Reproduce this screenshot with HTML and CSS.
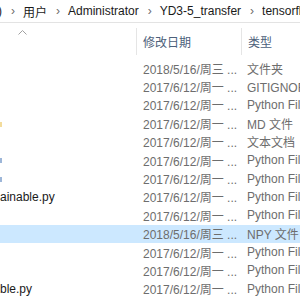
FILE: index.html
```html
<!DOCTYPE html>
<html lang="zh-CN">
<head>
   <meta charset="UTF-8">
   <title>tensorflow - 文件资源管理器</title>
   <link rel="stylesheet" href="styles.css">
</head>
<body>
   <div class="address-bar">
       <span class="crumb cut">)</span>
       <span class="sep">›</span>
       <span class="crumb">用户</span>
       <span class="sep">›</span>
       <span class="crumb">Administrator</span>
       <span class="sep">›</span>
       <span class="crumb">YD3-5_transfer</span>
       <span class="sep">›</span>
       <span class="crumb last">tensorflow</span>
   </div>

   <div class="col-header">
       <div class="col name-col">
           <svg class="sort-arrow" width="9" height="5" viewBox="0 0 9 5"><polyline points="0.5,4.5 4.5,0.5 8.5,4.5" fill="none" stroke="#a0a0a0" stroke-width="1"/></svg>
       </div>
       <div class="col date-col">修改日期</div>
       <div class="col type-col">类型</div>
   </div>

   <div class="file-list">
       <div class="row"><div class="name"></div><div class="date">2018/5/16/周三 ...</div><div class="type">文件夹</div></div>
       <div class="row"><div class="name"></div><div class="date">2017/6/12/周一 ...</div><div class="type">GITIGNORE 文件</div></div>
       <div class="row"><div class="name"></div><div class="date">2017/6/12/周一 ...</div><div class="type">Python File</div></div>
       <div class="row"><div class="name"><span class="frag yellow"></span></div><div class="date">2017/6/12/周一 ...</div><div class="type">MD 文件</div></div>
       <div class="row"><div class="name"></div><div class="date">2017/6/12/周一 ...</div><div class="type">文本文档</div></div>
       <div class="row"><div class="name"><span class="frag blue"></span></div><div class="date">2017/6/12/周一 ...</div><div class="type">Python File</div></div>
       <div class="row"><div class="name"><span class="frag blue"></span></div><div class="date">2017/6/12/周一 ...</div><div class="type">Python File</div></div>
       <div class="row"><div class="name">ainable.py</div><div class="date">2017/6/12/周一 ...</div><div class="type">Python File</div></div>
       <div class="row"><div class="name"></div><div class="date">2017/6/12/周一 ...</div><div class="type">Python File</div></div>
       <div class="row selected"><div class="name"></div><div class="date">2018/5/16/周三 ...</div><div class="type">NPY 文件</div></div>
       <div class="row"><div class="name"></div><div class="date">2017/6/12/周一 ...</div><div class="type">Python File</div></div>
       <div class="row"><div class="name"></div><div class="date">2017/6/12/周一 ...</div><div class="type">Python File</div></div>
       <div class="row"><div class="name">ble.py</div><div class="date">2017/6/12/周一 ...</div><div class="type">Python File</div></div>
   </div>
</body>
</html>
```

FILE: styles.css
```css
body {
    margin: 0;
    width: 300px;
    height: 300px;
    overflow: hidden;
    background: #ffffff;
    font-family: "Liberation Sans", "Noto Sans CJK SC", sans-serif;
    font-size: 12px;
}

.address-bar {
    height: 22px;
    border-bottom: 1px solid #e3e3e3;
    display: flex;
    align-items: center;
    white-space: nowrap;
    overflow: hidden;
    color: #1a1a1a;
}

.crumb {
    flex-shrink: 0;
}

.crumb.cut {
    margin-left: -2px;
}

.crumb.last {
    flex-shrink: 1;
    min-width: 0;
    overflow: hidden;
}

.sep {
    flex-shrink: 0;
    color: #6b6b6b;
    padding: 0 8px 0 9px;
}

.col-header {
    display: flex;
    height: 27px;
    margin-top: 5px;
    color: #4c607a;
}

.col {
    display: flex;
    align-items: center;
    white-space: nowrap;
    flex-shrink: 0;
}

.name-col {
    width: 136px;
    border-right: 1px solid #e5e5e5;
    align-items: flex-start;
}

.sort-arrow {
    margin-left: 18px;
    margin-top: 2px;
}

.date-col {
    width: 98px;
    padding-left: 6px;
    border-right: 1px solid #e5e5e5;
}

.type-col {
    padding-left: 6px;
}

.file-list {
    margin-top: 4px;
}

.row {
    display: flex;
    height: 18.4px;
    align-items: center;
    white-space: nowrap;
    color: #6d6d6d;
}

.row.selected {
    background: #cce8ff;
}

.name {
    width: 137px;
    flex-shrink: 0;
    color: #1a1a1a;
    overflow: hidden;
}

.date {
    width: 98px;
    flex-shrink: 0;
    padding-left: 6px;
}

.type {
    flex: 1;
    min-width: 0;
    padding-left: 6px;
    overflow: hidden;
}

/* tails of icons cut off by the left edge */
.frag {
    display: inline-block;
    width: 2px;
    height: 5px;
    vertical-align: middle;
}

.frag.yellow {
    background: #f3dc9c;
}

.frag.blue {
    background: #9db6d8;
}
```
